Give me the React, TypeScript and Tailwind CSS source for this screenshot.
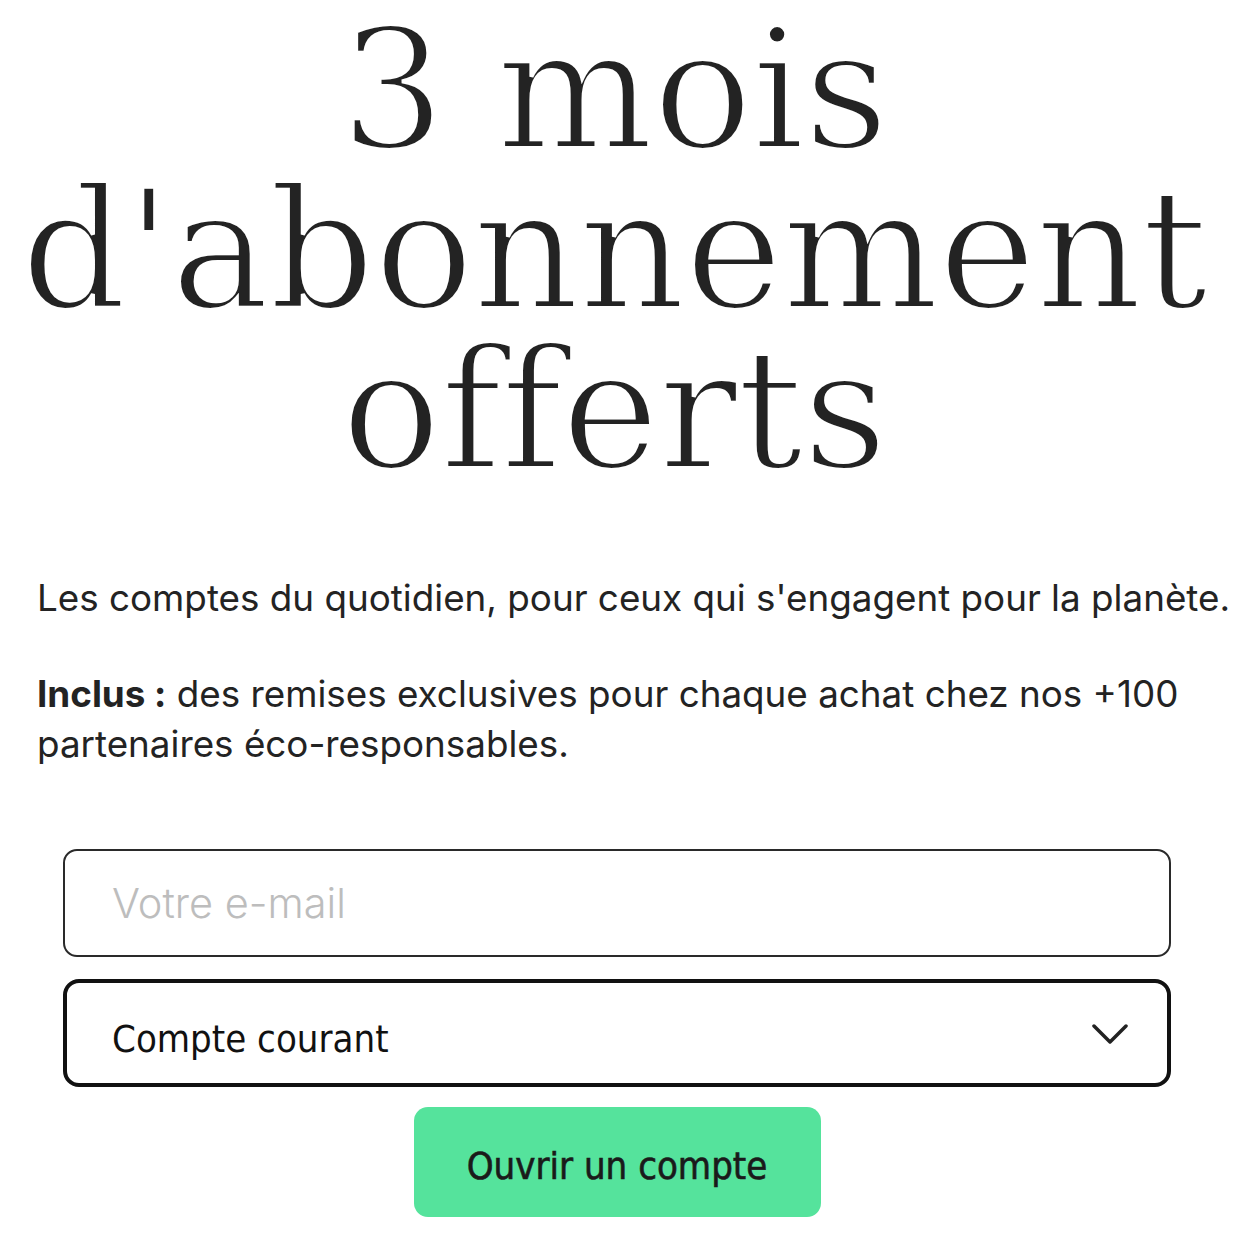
export default function App() {
  return (
    <div className="w-full min-h-screen bg-white text-[#232323] pt-[11px]">
      {/* Headline */}
      <h1 className="pr-[16px] text-center font-['DejaVu_Serif',serif] text-[166px] leading-[160px] font-normal tracking-[-1px] [-webkit-text-stroke:4px_#ffffff]">
        3 mois
        <br />
        d'abonnement
        <br />
        offerts
      </h1>

      {/* Intro */}
      <div className="mt-[82px] pl-[37px] font-['Inter',sans-serif] text-[36.8px] leading-[50px] text-[#232323]">
        <p className="whitespace-nowrap">Les comptes du quotidien, pour ceux qui s'engagent pour la planète.</p>
        <p className="mt-[46px] pr-[40px]">
          <span className="font-bold">Inclus :</span> des remises exclusives pour chaque achat chez nos +100
          partenaires éco-responsables.
        </p>
      </div>

      {/* Form */}
      <form className="mt-[80px] ml-[63px] w-[1108px] flex flex-col items-center">
        <input
          type="email"
          placeholder="Votre e-mail"
          className="w-full h-[108px] rounded-[14px] border-2 border-[#2a2a2a] pl-[47px] pr-6 font-['Inter',sans-serif] font-light text-[41.5px] text-[#232323] placeholder:text-[#bdbdbd] outline-none"
        />
        <div className="mt-[22px] w-full h-[108px] rounded-[16px] border-4 border-[#111] flex items-center justify-between pl-[45px] pr-[39px]">
          <span className="pt-[12px] font-['DejaVu_Sans_Condensed',sans-serif] text-[38px] text-[#111]">
            Compte courant
          </span>
          <svg width="36" height="24" viewBox="0 0 36 24" fill="none" className="mt-[2px]">
            <polyline points="2,4 18,20 34,4" stroke="#222" strokeWidth="3.5" strokeLinecap="round" strokeLinejoin="round" />
          </svg>
        </div>
        <button
          type="button"
          className="mt-[20px] w-[407px] h-[110px] rounded-[14px] bg-[#55e39c] pt-[9px] font-['DejaVu_Sans_Condensed',sans-serif] text-[38px] text-[#1a1a1a] [-webkit-text-stroke:0.6px_#1a1a1a] flex items-center justify-center"
        >
          Ouvrir un compte
        </button>
      </form>
    </div>
  );
}
